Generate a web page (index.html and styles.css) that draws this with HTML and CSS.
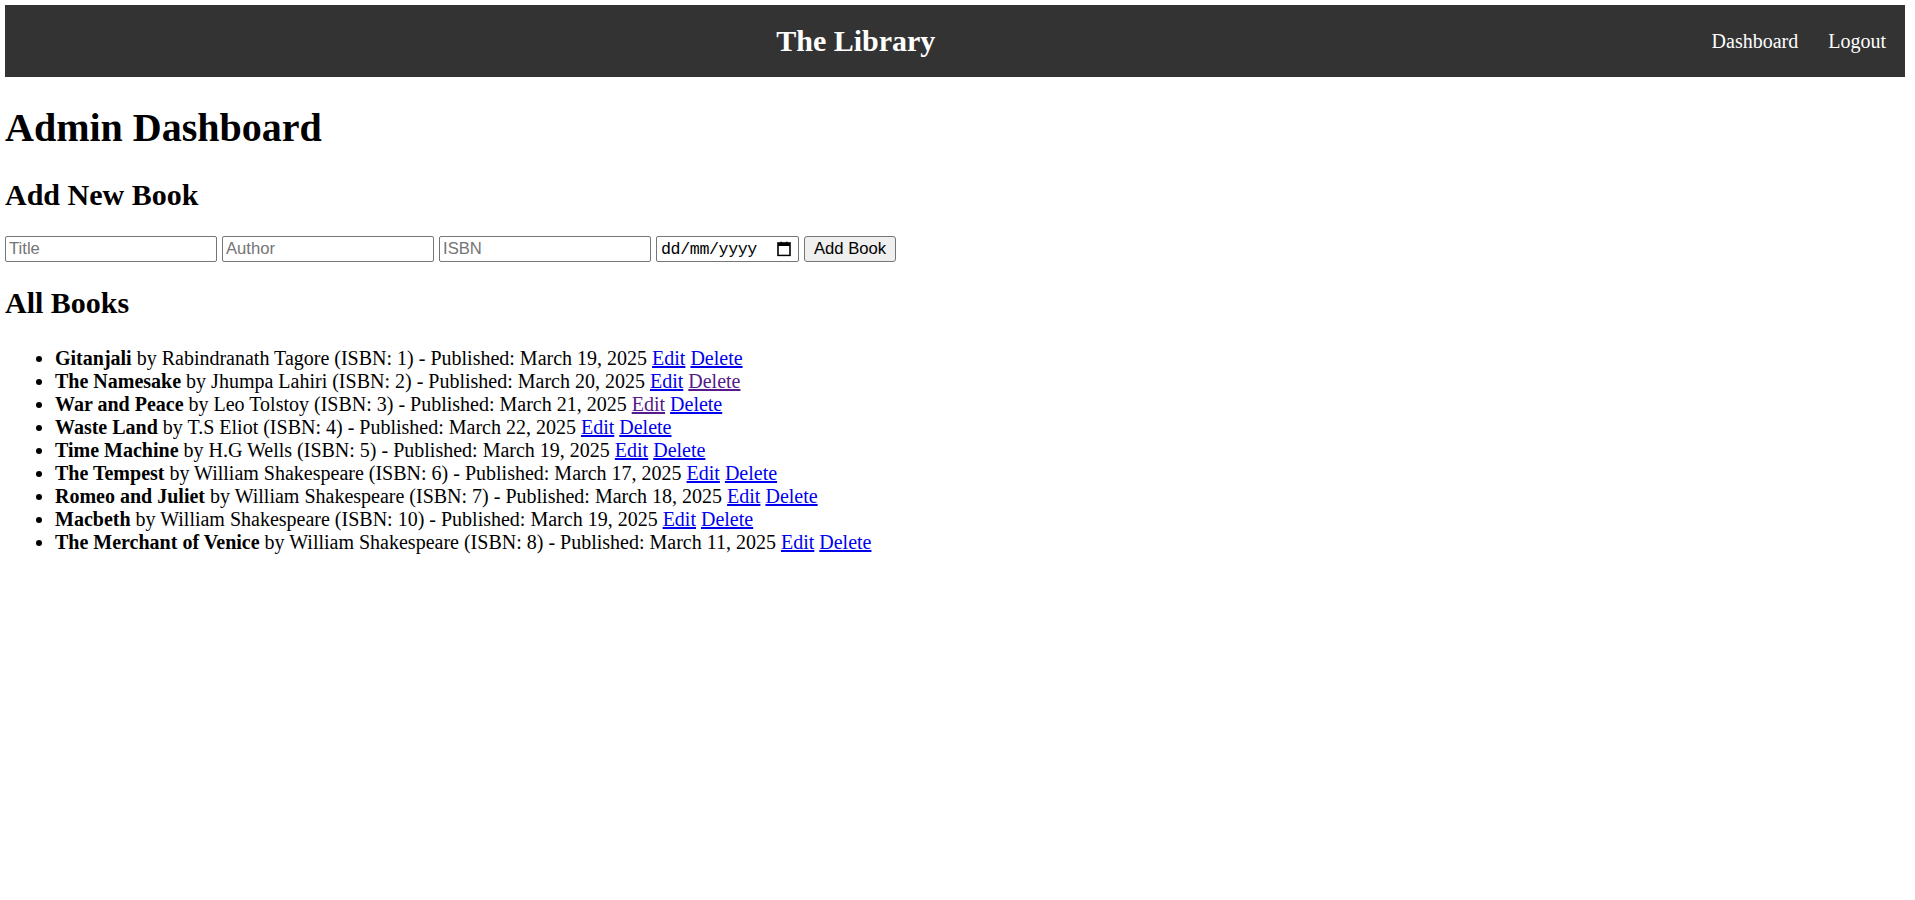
FILE: index.html
```html
<!DOCTYPE html>
<html lang="en">
<head>
<meta charset="utf-8">
<title>The Library - Admin Dashboard</title>
<link rel="stylesheet" href="styles.css">
</head>
<body>
<header class="topbar">
  <div class="brand">The Library</div>
  <nav class="nav">
    <a class="nav-link" href="#">Dashboard</a>
    <a class="nav-link" href="#">Logout</a>
  </nav>
</header>
<main class="content">
  <h1 class="page-title">Admin Dashboard</h1>
  <h2 class="section-title">Add New Book</h2>
  <form class="book-form">
    <input class="field" type="text" placeholder="Title">
    <input class="field" type="text" placeholder="Author">
    <input class="field" type="text" placeholder="ISBN">
    <span class="date-wrap"><input class="field field-date" type="text" placeholder="dd/mm/yyyy"><svg class="cal-icon" width="14" height="15" viewBox="0 0 14 15" aria-hidden="true"><rect x="1" y="1.5" width="12" height="12.5" fill="none" stroke="#000" stroke-width="1.6"/><rect x="1" y="1.5" width="12" height="3" fill="#000"/><rect x="3.5" y="0" width="1.6" height="2" fill="#000"/><rect x="8.9" y="0" width="1.6" height="2" fill="#000"/></svg></span>
    <button class="btn" type="button">Add Book</button>
  </form>
  <h2 class="section-title section-title--list">All Books</h2>
  <ul class="book-list">
    <li><strong>Gitanjali</strong> by Rabindranath Tagore (ISBN: 1) - Published: March 19, 2025 <a href="#">Edit</a> <a href="#">Delete</a></li>
    <li><strong>The Namesake</strong> by Jhumpa Lahiri (ISBN: 2) - Published: March 20, 2025 <a href="#">Edit</a> <a class="visited" href="#">Delete</a></li>
    <li><strong>War and Peace</strong> by Leo Tolstoy (ISBN: 3) - Published: March 21, 2025 <a class="visited" href="#">Edit</a> <a href="#">Delete</a></li>
    <li><strong>Waste Land</strong> by T.S Eliot (ISBN: 4) - Published: March 22, 2025 <a href="#">Edit</a> <a href="#">Delete</a></li>
    <li><strong>Time Machine</strong> by H.G Wells (ISBN: 5) - Published: March 19, 2025 <a href="#">Edit</a> <a href="#">Delete</a></li>
    <li><strong>The Tempest</strong> by William Shakespeare (ISBN: 6) - Published: March 17, 2025 <a href="#">Edit</a> <a href="#">Delete</a></li>
    <li><strong>Romeo and Juliet</strong> by William Shakespeare (ISBN: 7) - Published: March 18, 2025 <a href="#">Edit</a> <a href="#">Delete</a></li>
    <li><strong>Macbeth</strong> by William Shakespeare (ISBN: 10) - Published: March 19, 2025 <a href="#">Edit</a> <a href="#">Delete</a></li>
    <li><strong>The Merchant of Venice</strong> by William Shakespeare (ISBN: 8) - Published: March 11, 2025 <a href="#">Edit</a> <a href="#">Delete</a></li>
  </ul>
</main>
</body>
</html>
```
FILE: styles.css
```css
html {
  background: #ffffff;
}

body {
  margin: 5px 10px 5px 5px;
  font-family: "Liberation Serif", "Times New Roman", serif;
  font-size: 20px;
  color: #000000;
}

.topbar {
  display: flex;
  align-items: center;
  height: 72px;
  padding: 0 19px 0 20px;
  background: #333333;
}

.brand {
  flex: 1;
  text-align: center;
  font-size: 30px;
  font-weight: bold;
  color: #ffffff;
}

.nav {
  display: flex;
  gap: 30px;
  padding-left: 25px;
}

.nav-link {
  color: #ffffff;
  text-decoration: none;
  font-size: 20px;
}

.page-title {
  font-size: 40px;
  font-weight: bold;
  margin: 26.8px 0;
}

.section-title {
  font-size: 30px;
  font-weight: bold;
  margin: 24.9px 0;
}

.section-title--list {
  margin-top: 23.6px;
}

.book-form {
  margin: 0;
}

.field {
  box-sizing: border-box;
  width: 212px;
  height: 26px;
  margin: 0;
  padding: 1px 3px;
  border: 1px solid #767676;
  border-radius: 2px;
  font-family: "Liberation Sans", Arial, sans-serif;
  font-size: 16.67px;
  color: #000000;
  background: #ffffff;
  vertical-align: baseline;
}

.field::placeholder {
  color: #757575;
}

.date-wrap {
  position: relative;
  display: inline-block;
  vertical-align: top;
}

.field-date {
  display: block;
  width: 143px;
  padding: 1px 24px 1px 4px;
  font-family: "Liberation Mono", "Courier New", monospace;
  font-size: 16.67px;
  letter-spacing: -0.4px;
}

.field-date::placeholder {
  color: #000000;
}

.cal-icon {
  position: absolute;
  right: 8px;
  top: 50%;
  transform: translateY(-50%);
}

.btn {
  box-sizing: border-box;
  width: 92px;
  height: 26px;
  margin: 0;
  padding: 1px 7px;
  border: 1px solid #767676;
  border-radius: 3px;
  background: #efefef;
  font-family: "Liberation Sans", Arial, sans-serif;
  font-size: 16.67px;
  color: #000000;
}

.book-list {
  margin: 27px 0 20px;
  padding-left: 50px;
}

.book-list a {
  color: #0000ee;
  text-decoration: underline;
}

.book-list a.visited {
  color: #551a8b;
}
```
